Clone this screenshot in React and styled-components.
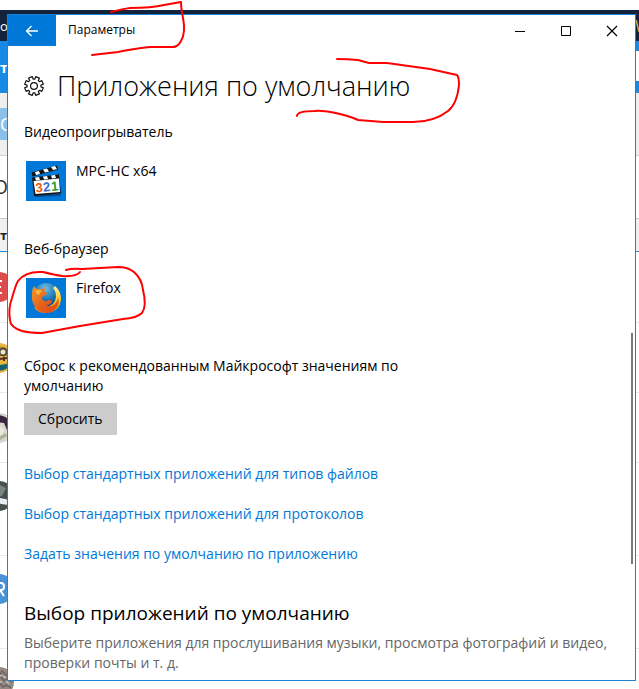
import React from "react";
import styled, { createGlobalStyle } from "styled-components";

const links = [
  "Выбор стандартных приложений для типов файлов",
  "Выбор стандартных приложений для протоколов",
  "Задать значения по умолчанию по приложению",
];

export default function App() {
  return (
    <>
      <GlobalStyle />
      <Desktop>
        <SiteBehind />
        <SettingsWindow aria-label="Параметры">
          <TitleBar>
            <BackButton type="button" aria-label="Назад">
              <svg width="14" height="12" viewBox="0 0 14 12" fill="none" stroke="currentColor" strokeWidth="1.3">
                <path d="M13 6H1.5M6.5 1L1.5 6l5 5" />
              </svg>
            </BackButton>
            <WindowTitle>Параметры</WindowTitle>
            <CaptionButton type="button" aria-label="Свернуть">
              <svg width="12" height="12" stroke="currentColor"><path d="M1 6.5h10" /></svg>
            </CaptionButton>
            <CaptionButton type="button" aria-label="Развернуть">
              <svg width="12" height="12" fill="none" stroke="currentColor"><path d="M1.5 1.5h9v9h-9z" /></svg>
            </CaptionButton>
            <CaptionButton type="button" aria-label="Закрыть">
              <svg width="12" height="12" stroke="currentColor" strokeWidth="1.2"><path d="M1 1l10 10M11 1L1 11" /></svg>
            </CaptionButton>
          </TitleBar>
          <Content>
            <Header>
              <GearIcon />
              <h1>Приложения по умолчанию</h1>
            </Header>
            <AppGroup>
              <h3>Видеопроигрыватель</h3>
              <AppButton type="button">
                <Tile><PlayerIcon /></Tile>
                <span>MPC-HC x64</span>
              </AppButton>
            </AppGroup>
            <AppGroup>
              <h3>Веб-браузер</h3>
              <AppButton type="button">
                <Tile><FirefoxIcon /></Tile>
                <span>Firefox</span>
              </AppButton>
            </AppGroup>
            <ResetText>Сброс к рекомендованным Майкрософт значениям по умолчанию</ResetText>
            <ResetButton type="button">Сбросить</ResetButton>
            <LinkList>
              {links.map((text) => (
                <li key={text}><a href="#">{text}</a></li>
              ))}
            </LinkList>
            <SectionTitle>Выбор приложений по умолчанию</SectionTitle>
            <Description>
              Выберите приложения для прослушивания музыки, просмотра фотографий и видео, проверки почты и т. д.
            </Description>
          </Content>
          <ScrollThumb />
        </SettingsWindow>
        <PenMarks />
      </Desktop>
    </>
  );
}

// The web page that shows around the edges of the window
function SiteBehind() {
  return (
    <Site aria-hidden="true">
      <Band $h={10} />
      <Band $h={31} $bg="#13233b">
        <Peek $color="#fff" $size={13}>ос</Peek>
        <Peek $color="#e8b04a" $size={16} $narrow>W</Peek>
      </Band>
      <Band $h={52} $bg="#198ae3">
        <Peek $color="#fff" $size={15} $bold $end>ит</Peek>
        <SiteField />
      </Band>
      <Band $h={63} $bg="#efefef" $line="#d0d0d0">
        <SearchEdge><Peek $color="#fff" $size={18}>О</Peek></SearchEdge>
      </Band>
      <Band $h={63} $line="#c8c8c8"><Peek $color="#333" $size={20} $end>О</Peek></Band>
      <Band $h={33} $bg="#f0f0f0" $line="#198ae3"><Peek $color="#222" $size={13} $bold>ти</Peek></Band>
      <Band $h={71} $line="#e8e8e8">
        <Avatar>
          <circle cx="15" cy="15" r="15" fill="#dc4c4c" />
          <path d="M18 9h-6v12h6M12 15h5" fill="none" stroke="#fff" strokeWidth="2" />
        </Avatar>
      </Band>
      <Band $h={70} $line="#e8e8e8">
        <Avatar>
          <circle cx="15" cy="15" r="15" fill="#e5b743" />
          <path d="M10 6q7-5 14 0l3 7H14z" fill="#c39635" />
          <circle cx="19" cy="9" r="3.500" fill="#eee4c7" stroke="#4d4938" strokeWidth="2" />
          <path d="M14 16l9-1M20 14v4" stroke="#512f28" strokeWidth="2" />
          <path d="M4 23l12-1 12-2q-10 14-24 3" fill="#16616a" />
        </Avatar>
      </Band>
      <Band $h={70} $line="#e8e8e8">
        <Avatar>
          <circle cx="15" cy="15" r="15" fill="#d6d8ce" />
          <path d="M9 2q20-1 19 17l-5-2-3-7-8-1z" fill="#3c263e" />
          <path d="M15 13l5 3-2 8-8 2" fill="#ebe8e1" />
          <path d="M13 25l8-5 2 3-10 6" fill="#a8b696" />
        </Avatar>
      </Band>
      <Band $h={93} $line="#e8e8e8" $top>
        <Avatar>
          <circle cx="15" cy="15" r="15" fill="#46504f" />
          <path d="M12 2l10 5-4 8-7 1z" fill="#788581" />
          <path d="M10 17q10-1 18 4l-4 3-14-2z" fill="#e9edf1" />
        </Avatar>
      </Band>
      <Band $h={93} $line="#e8e8e8" $top>
        <Avatar>
          <circle cx="15" cy="15" r="15" fill="#4a91d8" />
          <path d="M13 22V9h4q3 0 3 3.500t-3 3.500h-4m3 0l4 6" fill="none" stroke="#fff" strokeWidth="2" />
        </Avatar>
      </Band>
      <Band $h={60} $top>
        <Avatar>
          <circle cx="15" cy="15" r="15" fill="#938982" />
          <path d="M12 5l4 2 2-3 4 4 4 0M13 12l4-2 3 4 4-3 4 4M11 19l5-3 3 4 4-2 4 3" fill="none" stroke="#6d6560" strokeWidth="1.5" />
          <path d="M14 8l4 1M19 9l3 2M14 15l4 0M22 14l3 3" stroke="#cbc3ba" strokeWidth="1.5" />
        </Avatar>
        <SiteLink href="#" tabIndex={-1}>программу для просмотра видео</SiteLink>
      </Band>
    </Site>
  );
}

function GearIcon() {
  const teeth = [];
  const n = 8;
  for (let i = 0; i < n; i++) {
    const a = (i * 2 * Math.PI) / n - Math.PI / 2 + Math.PI / 8;
    [[-0.27, 7], [-0.21, 9.5], [0.21, 9.5], [0.27, 7]].forEach(([d, r]) => {
      teeth.push(`${(10 + r * Math.cos(a + d)).toFixed(2)} ${(10 + r * Math.sin(a + d)).toFixed(2)}`);
    });
  }
  return (
    <svg width="20" height="20" viewBox="0 0 20 20" fill="none" stroke="#111" strokeWidth="1.2" strokeLinejoin="round">
      <path d={`M${teeth.join("L")}Z`} />
      <circle cx="10" cy="10" r="3.4" />
    </svg>
  );
}

function PlayerIcon() {
  return (
    <svg width="40" height="40" viewBox="0 0 40 40">
      <path d="M8 34l27-1-1 2-25 1z" fill="#064c91" />
      <path d="M5.500 11.500L31 4.500l1 4L6.500 15.500z" fill="#151515" />
      <path d="M9 11l4-1 1 3-4 1zM17 8.500l4-1 2 3-4 1zM25 6l4-1 2 3-4 1z" fill="#fff" />
      <path d="M6 16.500l27-3 2 19-27 2.500z" fill="#151515" />
      <path d="M7.500 20l25.500-2.500 1 13.500L9.500 33z" fill="#fff" />
      <path d="M9 16.500l4-.5 1 3-4 .5zM17 15.500l4-.5 1 3-4 .5zM25 14.500l4-.5 1 3-4 .5z" fill="#fff" />
      <g fontFamily="Liberation Sans, sans-serif" fontWeight="700" fontSize="13" transform="rotate(-6 20 26)">
        <text x="9.500" y="30.500" fill="#e65b16">3</text>
        <text x="17" y="30.500" fill="#2f72d0">2</text>
        <text x="25" y="30.500" fill="#279c36">1</text>
      </g>
    </svg>
  );
}

function FirefoxIcon() {
  return (
    <svg width="40" height="40" viewBox="0 0 40 40">
      <defs>
        <radialGradient id="globe" cx="0.45" cy="0.2" r="0.8">
          <stop offset="0" stopColor="#6fc3e8" />
          <stop offset="0.5" stopColor="#1c75b8" />
          <stop offset="1" stopColor="#0a2c66" />
        </radialGradient>
        <linearGradient id="fox" x1="0" y1="0" x2="1" y2="1">
          <stop offset="0" stopColor="#f09a2a" />
          <stop offset="0.55" stopColor="#e5601b" />
          <stop offset="1" stopColor="#d64718" />
        </linearGradient>
        <linearGradient id="tail" x1="0" y1="0" x2="0" y2="1">
          <stop offset="0" stopColor="#fff09a" />
          <stop offset="0.5" stopColor="#ffc928" />
          <stop offset="1" stopColor="#ec741c" />
        </linearGradient>
      </defs>
      <circle cx="20.500" cy="19" r="14" fill="url(#globe)" />
      <path d="M29 8q6 5 6 13-1 13-15 14-9 0-12-6l11 0q10-1 11-10 0-6-3-9z" fill="url(#tail)" />
      <path d="M8 8q1 2 3 3l5 0q2-1 3-2 0 3-1 4l3 2q0 2-4 3-2 2-1 3 2 3 5 2 3-2 5 0-1 4-6 4 5 3 9-1 3-3 3-7 2 7-2 11-3 4-8 5-9 0-13-6-4-6-3-13 0-5 2-8z" fill="url(#fox)" />
      <path d="M9 13q4-2 7 0-2 1-3 4-3-1-4-4z" fill="#f7b548" />
    </svg>
  );
}

function PenMarks() {
  return (
    <PenLayer width="639" height="689" viewBox="0 0 639 689" aria-hidden="true">
      <path d="M111 12C119 10 123 9 130 8C143 8 152 8 164 5L181 2C181 8 182 13 183 18C185 28 184 36 181 41Q178 47 173 47L150 47Q132 49 118 52L92 55" />
      <path d="M337 59Q347 59 358 60L369 63L387 63L430 69L457 75Q459 77 459 85Q457 104 448 111Q434 122 413 122L383 122L358 120Q352 117 340 114Q322 110 315 111Q297 111 297 116" />
      <path d="M66 270Q72 268 82 269L118 267Q128 267 134 272Q142 279 143 290Q147 306 142 313Q137 318 123 319L80 326L42 333Q30 333 22 331Q10 327 10 320Q8 309 12 298Q16 284 18 281Q25 271 43 272Q55 275 62 276Q76 277 80 272" />
    </PenLayer>
  );
}

const GlobalStyle = createGlobalStyle`
  * {
    box-sizing: border-box;
  }
  body {
    margin: 0;
    background: #fff;
    color: #000;
    font-family: "Open Sans", "Noto Sans", sans-serif;
    font-size: 14px;
    line-height: 20px;
  }
  h1, h2, h3, p, ul {
    margin: 0;
    padding: 0;
    font-weight: 400;
  }
  button {
    border: 0;
    font: inherit;
    color: inherit;
  }
`;
const Desktop = styled.div`
  position: relative;
  overflow: hidden;
  min-height: 100vh;
  padding: 14px 3px 8px 7px;
`;
const Site = styled.div`
  position: absolute;
  inset: 0;
  overflow: hidden;
`;
const Band = styled.div`
  display: flex;
  align-items: ${(p) => (p.$top ? "flex-start" : "center")};
  justify-content: space-between;
  height: ${(p) => p.$h}px;
  padding-top: ${(p) => (p.$top ? 18 : 0)}px;
  background: ${(p) => p.$bg || "#fff"};
  border-bottom: ${(p) => (p.$line ? `1px solid ${p.$line}` : "0")};
`;
const Peek = styled.span`
  display: flex;
  justify-content: ${(p) => (p.$end ? "flex-end" : "flex-start")};
  width: ${(p) => (p.$narrow ? 4 : 8)}px;
  overflow: hidden;
  color: ${(p) => p.$color};
  font-size: ${(p) => p.$size}px;
  font-weight: ${(p) => (p.$bold ? 700 : 400)};
`;
const SiteField = styled.span`
  width: 50%;
  height: 30px;
  margin-bottom: 2px;
  background: #fff;
`;
const SearchEdge = styled.div`
  display: flex;
  align-items: center;
  width: 50%;
  height: 32px;
  background: #8bc0e9;
`;
const Avatar = styled.svg.attrs({ width: 30, height: 30, viewBox: "0 0 30 30" })`
  flex: none;
  margin-left: -16px;
`;
const SiteLink = styled.a`
  flex: 1;
  padding-left: 178px;
  color: #198ae3;
  font-size: 13px;
  line-height: 10px;
  text-decoration: none;
`;
const SettingsWindow = styled.main`
  position: relative;
  border: 1px solid #1883d7;
  background: #fff;
`;
const TitleBar = styled.header`
  display: flex;
  height: 31px;
`;
const BackButton = styled.button`
  display: flex;
  align-items: center;
  justify-content: center;
  width: 48px;
  background: #0078d7;
  color: #fff;
`;
const WindowTitle = styled.span`
  flex: 1;
  padding-left: 12px;
  font-size: 12px;
  line-height: 30px;
`;
const CaptionButton = styled.button`
  display: flex;
  align-items: center;
  justify-content: center;
  width: 46px;
  padding: 0;
  background: transparent;
`;
const Content = styled.div`
  padding: 20px 16px 7px;
`;
const Header = styled.div`
  display: flex;
  align-items: center;
  gap: 13px;
  height: 40px;
  margin-bottom: 16px;
  h1 {
    font-size: 27px;
    font-weight: 300;
    line-height: 40px;
  }
`;
const AppGroup = styled.section`
  margin-bottom: 38px;
  h3 {
    font-size: 14px;
  }
`;
const AppButton = styled.button`
  display: flex;
  gap: 10px;
  width: 100%;
  margin-top: 19px;
  padding: 0 2px;
  background: transparent;
  text-align: left;
`;
const Tile = styled.span`
  display: flex;
  width: 40px;
  height: 40px;
  background: #0078d7;
`;
const ResetText = styled.p`
  max-width: 400px;
`;
const ResetButton = styled.button`
  height: 32px;
  margin-top: 7px;
  padding: 0 14px;
  background: #ccc;
`;
const LinkList = styled.ul`
  display: grid;
  gap: 20px;
  margin: 29px 0 36px;
  list-style: none;
  a {
    color: #0078d7;
    text-decoration: none;
  }
`;
const SectionTitle = styled.h2`
  margin-bottom: 7px;
  font-size: 19px;
  line-height: 26px;
`;
const Description = styled.p`
  color: #666;
`;
const ScrollThumb = styled.div`
  position: absolute;
  top: 318px;
  right: 2px;
  width: 2px;
  height: 231px;
  background: #7a7a7a;
`;
const PenLayer = styled.svg`
  position: absolute;
  top: 0;
  left: 0;
  pointer-events: none;
  fill: none;
  stroke: #ff0000;
  stroke-width: 2;
  stroke-linecap: round;
  stroke-linejoin: round;
`;
